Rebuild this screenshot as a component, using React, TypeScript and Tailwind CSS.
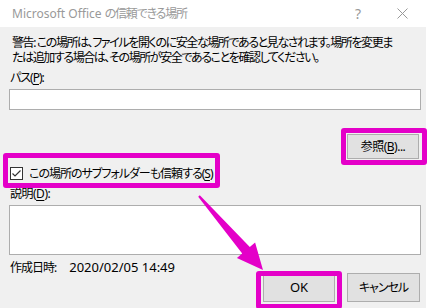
import React from "react";

const Key = ({ k }: { k: string }) => (
  <span className="underline underline-offset-[2px] decoration-1">{k}</span>
);

const Highlight = ({ className }: { className: string }) => (
  <div
    className={`absolute border-[5px] border-[#e400c8] rounded-[3px] pointer-events-none ${className}`}
  />
);

const Button = ({
  w,
  children,
}: {
  w: string;
  children: React.ReactNode;
}) => (
  <div
    className={`${w} h-full flex items-center justify-center bg-[#e1e1e1] border border-[#adadad]`}
  >
    {children}
  </div>
);

const App = () => {
  return (
    <div className="relative w-[431px] h-[308px] overflow-hidden bg-white text-black text-[12px] font-['Noto_Sans','Noto_Sans_CJK_JP',sans-serif] [font-feature-settings:'palt']">
      {/* title bar */}
      <div className="h-[27px] flex items-center pl-[12px] text-[#999]">
        <span>
          Microsoft Office <span className="tracking-[-1.2px]">の信頼できる場所</span>
        </span>
        <span className="ml-auto text-[14px]">?</span>
        <svg
          width="11"
          height="11"
          viewBox="0 0 11 11"
          className="ml-[36px] mr-[23px]"
        >
          <path d="M0.5 0.5 L10.5 10.5 M10.5 0.5 L0.5 10.5" stroke="#999" strokeWidth="1" />
        </svg>
      </div>

      {/* body */}
      <div className="w-[426px] h-[281px] bg-[#f0f0f0] pt-[8px] pl-[9px] pr-[5px] flex flex-col">
        <p className="pl-[3px] leading-[15px] whitespace-nowrap tracking-[-1.4px]">
          警告: この場所は、ファイルを開くのに安全な場所であると見なされます。場所を変更ま
          <br />
          たは追加する場合は、その場所が安全であることを確認してください。
        </p>
        <div className="mt-[5px] pl-[1px] leading-[15px] tracking-[-1px]">
          パス(<Key k="P" />):
        </div>
        <div className="mt-[4px] h-[21px] bg-white border border-[#adadad]" />

        <div className="mt-[24px] h-[25px] flex justify-end pr-[2px]">
          <Button w="w-[72px]">
            <span className="tracking-[-0.5px]">
              参照(<Key k="B" />)...
            </span>
          </Button>
        </div>

        <div className="mt-[7px] h-[15px] flex items-center gap-[6px] pl-[1px]">
          <div className="w-[13px] h-[13px] bg-white border border-[#333] flex items-center justify-center">
            <svg width="11" height="11" viewBox="0 0 11 11">
              <path d="M1.5 5.5 L4 8 L9.5 2.5" fill="none" stroke="#333" strokeWidth="1.2" />
            </svg>
          </div>
          <span className="leading-[15px] tracking-[-1px]">
            この場所のサブフォルダーも信頼する(<Key k="S" />)
          </span>
        </div>

        <div className="mt-[5px] pl-[1px] leading-[15px] tracking-[-0.5px]">
          説明(<Key k="D" />):
        </div>
        <div className="mt-[4px] h-[50px] bg-white border border-[#adadad]" />

        <div className="mt-[5px] flex items-start">
          <div className="pl-[1px] leading-[15px] flex items-baseline gap-[13px]">
            <span className="tracking-[-1px]">作成日時:</span>
            <span className="text-[13px]">2020/02/05 14:49</span>
          </div>
          <div className="ml-auto mt-[13px] h-[29px] flex gap-[12px] pr-[1px]">
            <Button w="w-[72px]">
              <span className="text-[13px]">OK</span>
            </Button>
            <Button w="w-[73px]">
              <span className="tracking-[-1px]">キャンセル</span>
            </Button>
          </div>
        </div>
      </div>

      {/* annotations */}
      <Highlight className="left-[341px] top-[128px] w-[86px] h-[37px]" />
      <Highlight className="left-[3px] top-[153px] w-[217px] h-[35px]" />
      <Highlight className="left-[256px] top-[271px] w-[86px] h-[38px]" />
      <svg
        className="absolute left-0 top-0 pointer-events-none"
        width="431"
        height="308"
        viewBox="0 0 431 308"
      >
        <polygon
          points="198.2,196.7 242.2,253.6 236.9,258.1 263,270 255.1,242.5 249.8,247 199.8,195.3"
          fill="#e400c8"
        />
      </svg>
    </div>
  );
};

export default App;
